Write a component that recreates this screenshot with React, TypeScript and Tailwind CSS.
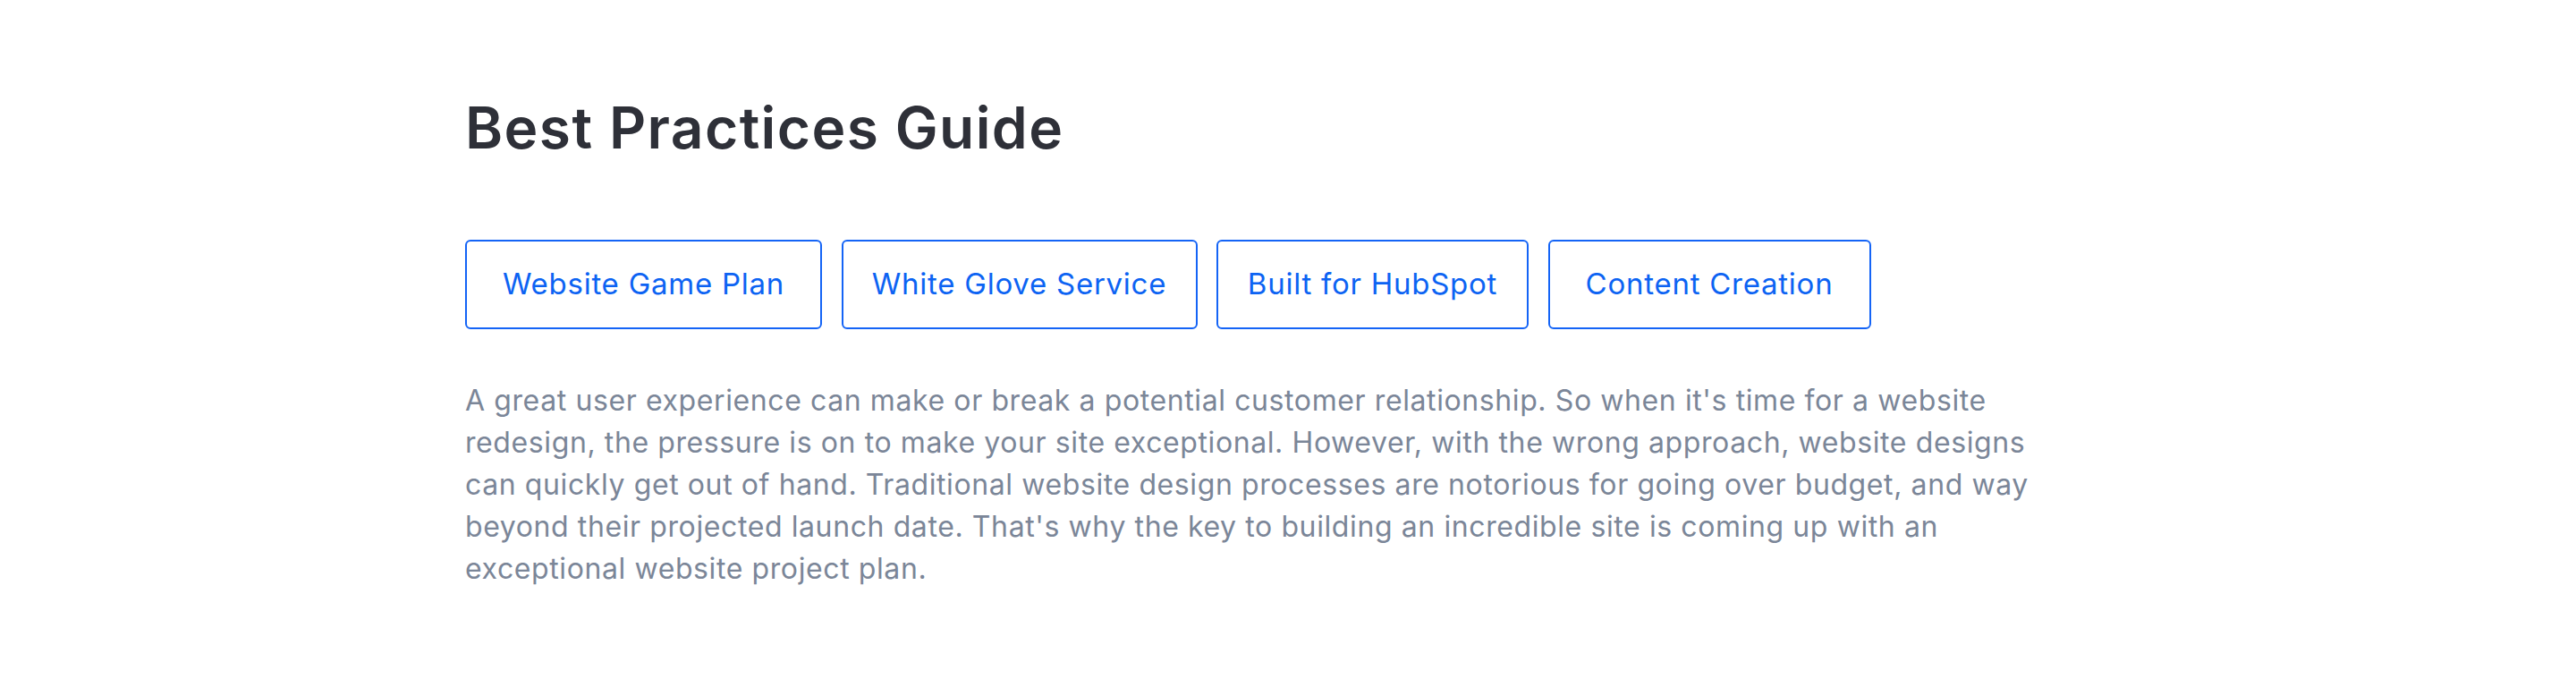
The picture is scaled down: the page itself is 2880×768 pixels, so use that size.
import React from "react";

const tabs = [
  { label: "Website Game Plan", w: "w-[399px]" },
  { label: "White Glove Service", w: "w-[398px]" },
  { label: "Built for HubSpot", w: "w-[349px]" },
  { label: "Content Creation", w: "w-[361px]" },
];

export default function App() {
  return (
    <div className="min-h-screen bg-white" style={{ fontFamily: "Inter, 'Noto Sans', sans-serif" }}>
      <div className="mx-auto max-w-[1840px] pt-[104px]">
        <h2 className="text-[64px] font-semibold leading-[77px] tracking-[1.4px] text-[#2e3038]">Best Practices Guide</h2>
        <div className="mt-[87px] flex gap-[21.5px]">
          {tabs.map((t) => (
            <button
              key={t.label}
              className={`${t.w} flex h-[100px] items-center justify-center rounded-[6px] border-2 border-[#1464f6] bg-white text-[33px] tracking-[0.75px] text-[#0c63f3]`}
            >
              {t.label}
            </button>
          ))}
        </div>
        <p className="mt-[56px] max-w-[1800px] text-[32px] leading-[47px] tracking-[0.6px] text-[#7b8698]">
          A great user experience can make or break a potential customer relationship. So when it's time for a website
          redesign, the pressure is on to make your site exceptional. However, with the wrong approach, website designs
          can quickly get out of hand. Traditional website design processes are notorious for going over budget, and way
          beyond their projected launch date. That's why the key to building an incredible site is coming up with an
          exceptional website project plan.
        </p>
      </div>
    </div>
  );
}
